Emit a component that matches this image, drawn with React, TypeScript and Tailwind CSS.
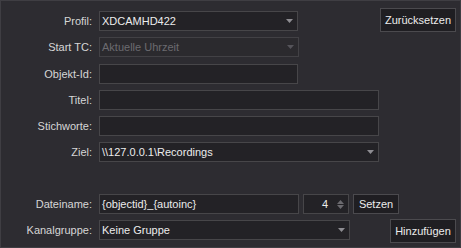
import React from "react";

const Arrow = ({ disabled }: { disabled?: boolean }) => (
  <svg width="7" height="4" viewBox="0 0 7 4" className="shrink-0">
    <path d="M0 0H7L3.5 4Z" fill={disabled ? "#55545a" : "#8e8d92"} />
  </svg>
);

const Label = ({ children }: { children: React.ReactNode }) => (
  <div className="w-[91px] shrink-0 text-right text-[#d6d6d6] leading-[20px]">{children}</div>
);

const Input = ({ w, children }: { w: string; children?: React.ReactNode }) => (
  <div className={`${w} h-[20px] shrink-0 border border-[#474649] bg-[#232226] pl-[2px] leading-[18px] text-[#ececec] whitespace-nowrap overflow-hidden`}>
    {children}
  </div>
);

const Combo = ({ w, children, disabled }: { w: string; children?: React.ReactNode; disabled?: boolean }) => (
  <div
    className={`${w} h-[20px] shrink-0 border ${disabled ? "border-[#424145] bg-[#2b2a2e] text-[#6c6b70]" : "border-[#474649] bg-[#232226] text-[#ececec]"} pl-[2px] pr-[4px] flex items-center justify-between leading-[18px] whitespace-nowrap`}
  >
    <span>{children}</span>
    <Arrow disabled={disabled} />
  </div>
);

const Button = ({ w, h, children }: { w: string; h: string; children: React.ReactNode }) => (
  <div className={`${w} ${h} shrink-0 border border-[#4b4a4e] bg-[#1f1e22] text-[#ececec] flex items-center justify-center`}>
    {children}
  </div>
);

export default function App() {
  return (
    <div
      className="w-[461px] h-[248px] border border-[#3f3e43] bg-[#2d2c31] text-[11px] pt-[10px] pr-[4px] flex flex-col gap-[6px]"
      style={{ fontFamily: '"Liberation Sans", Arial, sans-serif' }}
    >
      <div className="flex items-center h-[20px]">
        <Label>Profil:</Label>
        <div className="ml-[7px]">
          <Combo w="w-[199px]">XDCAMHD422</Combo>
        </div>
        <div className="ml-auto -mt-[2px]">
          <Button w="w-[76px]" h="h-[24px]">Zurücksetzen</Button>
        </div>
      </div>
      <div className="flex items-center h-[20px]">
        <Label>Start TC:</Label>
        <div className="ml-[7px]">
          <Combo w="w-[200px]" disabled>Aktuelle Uhrzeit</Combo>
        </div>
      </div>
      <div className="flex items-center h-[20px] mt-[1px]">
        <Label>Objekt-Id:</Label>
        <div className="ml-[7px]">
          <Input w="w-[199px]" />
        </div>
      </div>
      <div className="flex items-center h-[20px]">
        <Label>Titel:</Label>
        <div className="ml-[7px]">
          <Input w="w-[280px]" />
        </div>
      </div>
      <div className="flex items-center h-[20px]">
        <Label>Stichworte:</Label>
        <div className="ml-[7px]">
          <Input w="w-[280px]" />
        </div>
      </div>
      <div className="flex items-center h-[20px]">
        <Label>Ziel:</Label>
        <div className="ml-[7px]">
          <Combo w="w-[280px]">\\127.0.0.1\Recordings</Combo>
        </div>
      </div>
      <div className="flex items-center h-[20px] mt-[26px]">
        <Label>Dateiname:</Label>
        <div className="ml-[7px] flex gap-[4px]">
          <Input w="w-[200px]">{"{objectid}_{autoinc}"}</Input>
          <div className="w-[46px] h-[20px] border border-[#474649] bg-[#232226] flex items-center justify-end pr-[4px] text-[#ececec]">
            <span className="mr-[9px]">4</span>
            <div className="flex flex-col gap-[1px]">
              <svg width="7" height="4" viewBox="0 0 7 4">
                <path d="M3.5 0L7 4H0Z" fill="#6b6a6f" />
              </svg>
              <svg width="7" height="4" viewBox="0 0 7 4">
                <path d="M0 0H7L3.5 4Z" fill="#6b6a6f" />
              </svg>
            </div>
          </div>
          <Button w="w-[46px]" h="h-[20px]">Setzen</Button>
        </div>
      </div>
      <div className="flex items-center h-[20px]">
        <Label>Kanalgruppe:</Label>
        <div className="ml-[7px]">
          <Combo w="w-[251px]">Keine Gruppe</Combo>
        </div>
        <div className="ml-auto mt-[2px]">
          <Button w="w-[66px]" h="h-[24px]">Hinzufügen</Button>
        </div>
      </div>
    </div>
  );
}
